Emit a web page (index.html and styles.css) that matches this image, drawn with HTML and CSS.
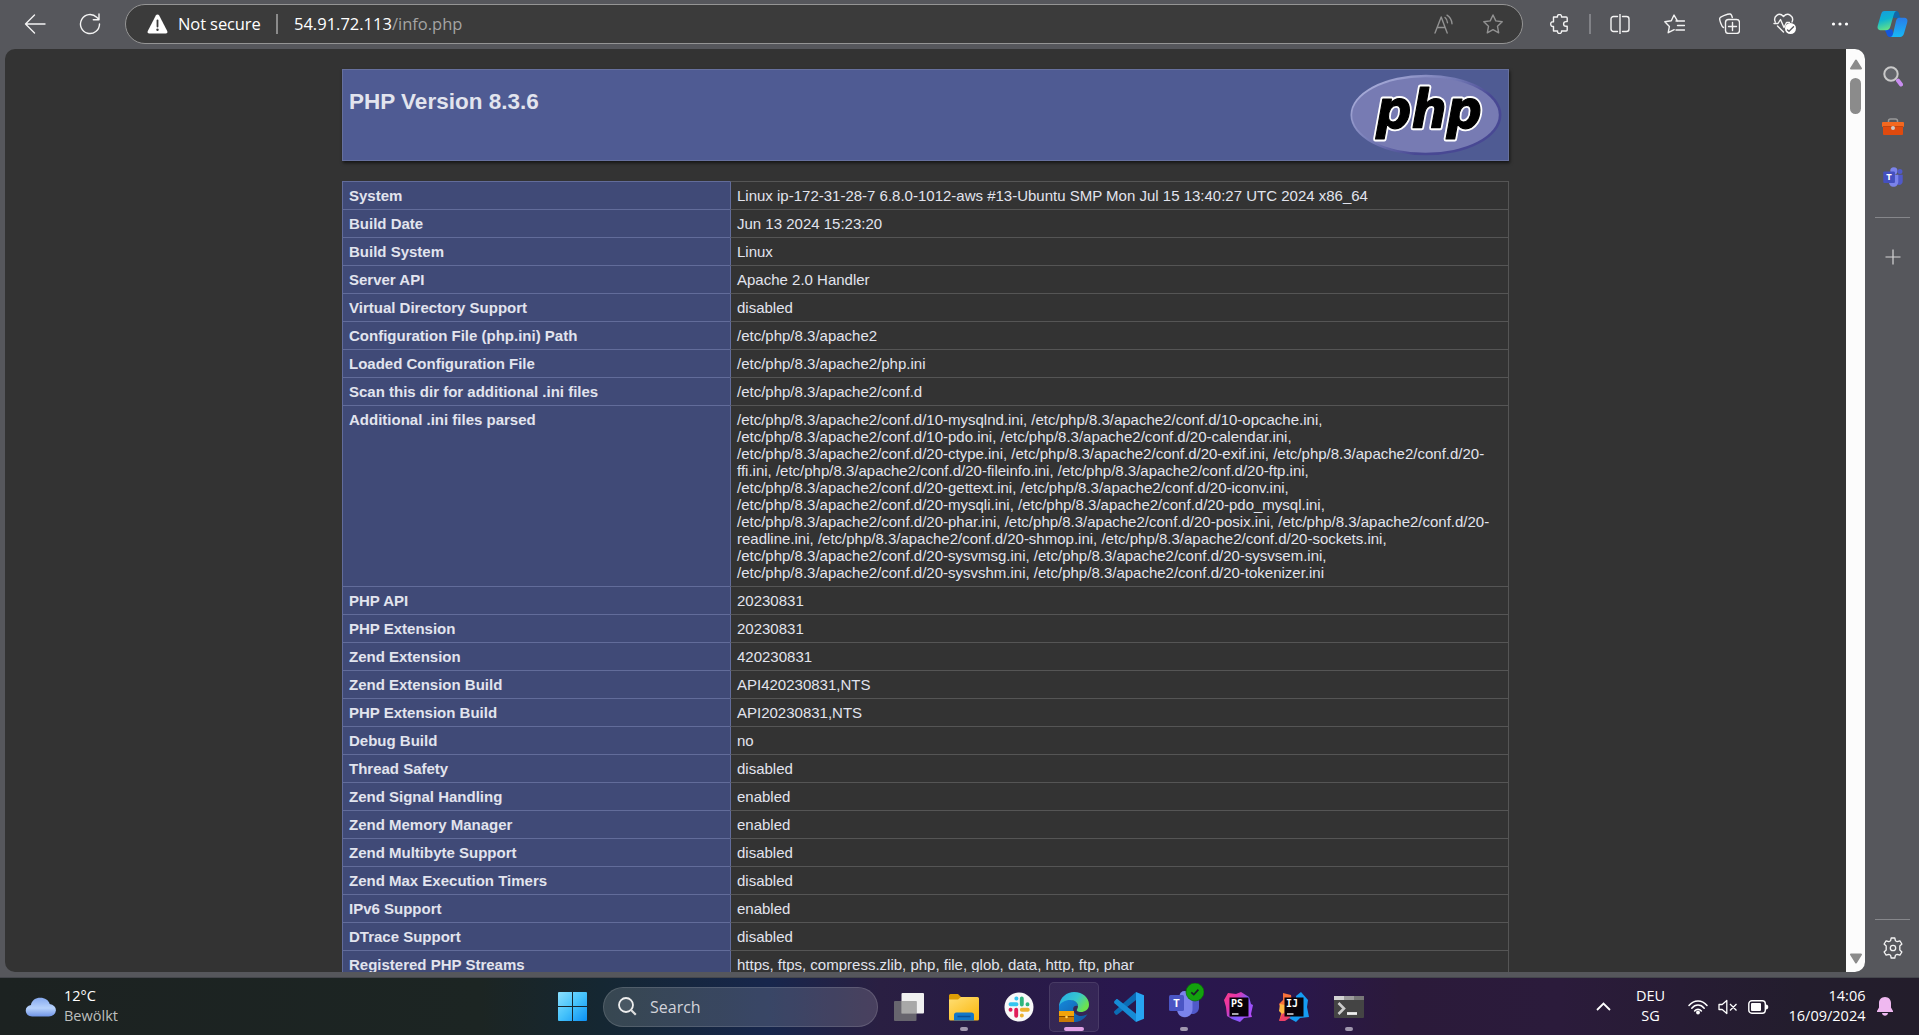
FILE: index.html
```html
<!DOCTYPE html>
<html lang="en">
<head>
<meta charset="utf-8">
<title>PHP 8.3.6 - phpinfo()</title>
<link rel="stylesheet" href="styles.css">
</head>
<body>
<div class="screen">
  <header class="toolbar">
    <span class="tool nav"><svg width="22" height="22" viewBox="0 0 22 22"><path d="M21 11H1.5M10.5 2 1.5 11l9 9"/></svg></span>
    <span class="tool nav"><svg width="22" height="22" viewBox="0 0 22 22"><path d="M20.5 11A9.5 9.5 0 1 1 17.7 4.3L20 6.5M20 1v5.7h-5.7"/></svg></span>
    <div class="address">
      <svg class="warn" width="21" height="20" viewBox="0 0 21 20"><path d="M10.5.5c.8 0 1.300.4 1.700 1.100l8 15.400c.7 1.400 0 2.500-1.500 2.500H2.300C.8 19.500.1 18.400.8 17l8-15.400C9.200.9 9.700.5 10.500.5z" fill="#fff"/><path d="M10.500 6.500v6" stroke="#3b3b3b" stroke-width="1.800" stroke-linecap="round"/><circle cx="10.500" cy="15.700" r="1.200" fill="#3b3b3b"/></svg>
      <span class="insecure">Not secure</span>
      <i class="bar"></i>
      <span class="url">54.91.72.113<span class="path">/info.php</span></span>
      <span class="tool dim read"><svg width="20" height="20" viewBox="0 0 20 20"><path d="M1 19 7.200 3l6 16M3.300 13.500h7.900M11 3.500c1.600 1.300 2.400 3 2.500 5.200M13 1.200c3.200 2 4.800 4.900 5 8.600"/></svg></span>
      <span class="tool dim star"><svg width="20" height="20" viewBox="0 0 20 20"><path d="m10 1 2.800 5.900 6.400.9-4.700 4.500 1.200 6.500L10 15.700l-5.700 3.100 1.200-6.500L.8 7.800l6.400-.9z"/></svg></span>
    </div>
    <span class="tool ext"><svg width="20" height="20" viewBox="0 0 20 20"><path d="M3.500 3h4c-.3-1.800.8-2.500 2-2.500s2.300.8 2 2.500h4.700c.6 0 1 .4 1 1v3.600h-1.300a2.200 2.200 0 1 0 0 4.600h1.300V16c0 .600-.4 1-1 1h-4.700c.2 1.700-.8 2.500-2 2.500s-2.200-.8-2-2.500h-4V12.400c-2 .3-2.800-.9-2.800-2.300s.9-2.600 2.800-2.300z"/></svg></span>
    <i class="split"></i>
    <span class="tool"><svg width="20" height="20" viewBox="0 0 20 20"><path d="M7.500 2.500H3.500a2.500 2.500 0 0 0-2.500 2.500v10a2.500 2.500 0 0 0 2.500 2.500h4M12.500 2.500h4a2.500 2.500 0 0 1 2.500 2.500v10a2.500 2.500 0 0 1-2.500 2.500h-4M10 0v20"/></svg></span>
    <span class="tool"><svg width="21" height="20" viewBox="0 0 21 20"><path d="M13.500 7.200 10 1 7.300 6.800.8 7.700l4.600 4.700-1.200 6.300 6-3M12 7h8.500M13.500 11.500h7M12 16h8.500"/></svg></span>
    <span class="tool"><svg width="21" height="21" viewBox="0 0 21 21"><path d="M4.500 14.500C2.500 13.800.5 7 .7 5.500 1 3.500 9.500.8 11 1s2 2 2.300 3.500"/><rect x="6.500" y="6.500" width="14" height="14" rx="3"/><path d="M13.500 9.500v8M9.500 13.500h8"/></svg></span>
    <span class="tool"><svg width="24" height="22" viewBox="0 0 24 22"><path d="M2.300 9C-.2 3.500 6-1.500 10.500 3.500 15-1.500 21.500 3.500 19 9M1 10.500h4l2.500-4 3.500 8 2.500-5h3M4.500 13l6 6"/><circle cx="17.500" cy="15.500" r="5.500" fill="#fff" stroke="none"/><path d="m14.500 17 1.500 1.300 4.500-4.500" stroke="#55565b"/></svg></span>
    <span class="tool"><svg width="18" height="6" viewBox="0 0 18 6"><g fill="#fff" stroke="none"><circle cx="2.500" cy="3" r="1.600"/><circle cx="9" cy="3" r="1.600"/><circle cx="15.500" cy="3" r="1.600"/></g></svg></span>
    <span class="tool copilot"><svg width="31" height="28" viewBox="0 0 31 28"><defs><linearGradient id="ca" x2=".3" y2="1"><stop stop-color="#159bdf"/><stop offset=".5" stop-color="#0fb3d0"/><stop offset="1" stop-color="#5fe08b"/></linearGradient><linearGradient id="cb" x2="0" y2="1"><stop stop-color="#2a7ce8"/><stop offset="1" stop-color="#17b8f5"/></linearGradient></defs><path d="M14 1h5c2.500 0 3 2 3.700 4.500L23.500 8h-7z" fill="#1267a8"/><path d="M7.500 19.500h8l1 7.500h-3c-3 0-3.500-2-4.200-4z" fill="#1457dc"/><path d="M7.500 1H20c-2 0-2.800 2-3.500 4.500L13.500 16c-.8 3-2 4.300-4.500 4.300H4.500C1 20.300 0 18.500.8 15.500L4 4.500C4.700 2 5.500 1 7.500 1z" fill="url(#ca)"/><path d="M21.500 7.700h5c3.500 0 4.500 2 3.700 4.800L27 23.500c-.7 2.300-2 3.500-4 3.500h-10c2 0 2.500-1.500 3.100-3.500L19 11c.5-2 1.200-2.600 2.500-3.300z" fill="url(#cb)"/></svg></span>
  </header>

  <div class="middle">
    <div class="viewport">
      <main class="page">
        <section class="banner">
          <h1>PHP Version 8.3.6</h1>
          <svg class="logo" width="152" height="82" viewBox="0 0 152 82"><defs><linearGradient id="rim" x2="1" y2=".7"><stop offset=".1" stop-color="#aeb2dd"/><stop offset=".5" stop-color="#7177b3"/><stop offset=".75" stop-color="#484893"/></linearGradient></defs><ellipse cx="76" cy="41" rx="75.500" ry="40.300" fill="url(#rim)"/><ellipse cx="75.500" cy="41" rx="73.300" ry="37.800" fill="#777bb3"/><g class="mark"><text class="halo" x="26" y="54" textLength="106" lengthAdjust="spacingAndGlyphs">php</text><text x="26" y="54" textLength="106" lengthAdjust="spacingAndGlyphs">php</text></g></svg>
        </section>
        <table class="info">
          <tr><td>System</td><td>Linux ip-172-31-28-7 6.8.0-1012-aws #13-Ubuntu SMP Mon Jul 15 13:40:27 UTC 2024 x86_64</td></tr>
          <tr><td>Build Date</td><td>Jun 13 2024 15:23:20</td></tr>
          <tr><td>Build System</td><td>Linux</td></tr>
          <tr><td>Server API</td><td>Apache 2.0 Handler</td></tr>
          <tr><td>Virtual Directory Support</td><td>disabled</td></tr>
          <tr><td>Configuration File (php.ini) Path</td><td>/etc/php/8.3/apache2</td></tr>
          <tr><td>Loaded Configuration File</td><td>/etc/php/8.3/apache2/php.ini</td></tr>
          <tr><td>Scan this dir for additional .ini files</td><td>/etc/php/8.3/apache2/conf.d</td></tr>
          <tr><td>Additional .ini files parsed</td><td>/etc/php/8.3/apache2/conf.d/10-mysqlnd.ini, /etc/php/8.3/apache2/conf.d/10-opcache.ini,<br>/etc/php/8.3/apache2/conf.d/10-pdo.ini, /etc/php/8.3/apache2/conf.d/20-calendar.ini,<br>/etc/php/8.3/apache2/conf.d/20-ctype.ini, /etc/php/8.3/apache2/conf.d/20-exif.ini, /etc/php/8.3/apache2/conf.d/20-<br>ffi.ini, /etc/php/8.3/apache2/conf.d/20-fileinfo.ini, /etc/php/8.3/apache2/conf.d/20-ftp.ini,<br>/etc/php/8.3/apache2/conf.d/20-gettext.ini, /etc/php/8.3/apache2/conf.d/20-iconv.ini,<br>/etc/php/8.3/apache2/conf.d/20-mysqli.ini, /etc/php/8.3/apache2/conf.d/20-pdo_mysql.ini,<br>/etc/php/8.3/apache2/conf.d/20-phar.ini, /etc/php/8.3/apache2/conf.d/20-posix.ini, /etc/php/8.3/apache2/conf.d/20-<br>readline.ini, /etc/php/8.3/apache2/conf.d/20-shmop.ini, /etc/php/8.3/apache2/conf.d/20-sockets.ini,<br>/etc/php/8.3/apache2/conf.d/20-sysvmsg.ini, /etc/php/8.3/apache2/conf.d/20-sysvsem.ini,<br>/etc/php/8.3/apache2/conf.d/20-sysvshm.ini, /etc/php/8.3/apache2/conf.d/20-tokenizer.ini</td></tr>
          <tr><td>PHP API</td><td>20230831</td></tr>
          <tr><td>PHP Extension</td><td>20230831</td></tr>
          <tr><td>Zend Extension</td><td>420230831</td></tr>
          <tr><td>Zend Extension Build</td><td>API420230831,NTS</td></tr>
          <tr><td>PHP Extension Build</td><td>API20230831,NTS</td></tr>
          <tr><td>Debug Build</td><td>no</td></tr>
          <tr><td>Thread Safety</td><td>disabled</td></tr>
          <tr><td>Zend Signal Handling</td><td>enabled</td></tr>
          <tr><td>Zend Memory Manager</td><td>enabled</td></tr>
          <tr><td>Zend Multibyte Support</td><td>disabled</td></tr>
          <tr><td>Zend Max Execution Timers</td><td>disabled</td></tr>
          <tr><td>IPv6 Support</td><td>enabled</td></tr>
          <tr><td>DTrace Support</td><td>disabled</td></tr>
          <tr><td>Registered PHP Streams</td><td>https, ftps, compress.zlib, php, file, glob, data, http, ftp, phar</td></tr>
        </table>
      </main>
      <div class="scrollbar">
        <svg width="14" height="11" viewBox="0 0 14 11"><path d="M7 1.500 12 9.500H2z" fill="#8b8b8b" stroke="#8b8b8b" stroke-width="2" stroke-linejoin="round"/></svg>
        <i class="thumb"></i>
        <svg class="down" width="14" height="11" viewBox="0 0 14 11"><path d="M7 9.500 12 1.500H2z" fill="#8b8b8b" stroke="#8b8b8b" stroke-width="2" stroke-linejoin="round"/></svg>
      </div>
    </div>
    <aside class="sidebar">
      <span class="side"><svg width="20" height="21" viewBox="0 0 20 21"><circle cx="8" cy="8" r="6.700" fill="#63656b" stroke="#c9c9c9" stroke-width="2"/><path d="m15 14.500 3 4" stroke="#c98df0" stroke-width="4" stroke-linecap="round"/></svg></span>
      <span class="side"><svg width="22" height="17" viewBox="0 0 22 17"><path d="M6.500 4.500V3A2 2 0 0 1 8.500 1h5a2 2 0 0 1 2 2v1.500" fill="none" stroke="#999" stroke-width="1.500"/><path d="M1 8h20v8a1 1 0 0 1-1 1H2a1 1 0 0 1-1-1z" fill="#e04a0e"/><rect y="4" width="22" height="5" rx="1" fill="#f4681f"/><path d="M1 8.500h20" stroke="#b83b0a" stroke-width=".8"/><circle cx="11" cy="10" r="2" fill="#cfc8c5"/></svg></span>
      <span class="side teams"><svg width="20" height="20" viewBox="0 0 35 36"><circle cx="19" cy="7" r="6.500" fill="#7b83eb"/><circle cx="30" cy="8" r="4.500" fill="#5059c9"/><path d="M25 14h10v11c0 6-6 9-10 6z" fill="#5059c9"/><path d="M10 14h17v12c0 13-17 13-17 0z" fill="#7b83eb"/><rect y="8" width="21" height="21" rx="2" fill="#4450c0"/><text x="10.500" y="24" class="tee">T</text></svg></span>
      <i class="rule"></i>
      <span class="side plus"><svg width="16" height="16" viewBox="0 0 16 16"><path d="M8 .5v15M.5 8h15" stroke="#d5d5d6" stroke-width="1.200"/></svg></span>
      <i class="rule low"></i>
      <span class="side gear"><svg width="22" height="22" viewBox="0 0 22 22" fill="none" stroke="#f3f3f3" stroke-width="1.300" stroke-linejoin="round"><path d="M9.200 1h3.600l.6 2.700 1.800 1 2.700-.9 2 3.200-2.100 1.900v4.200l2.100 1.900-2 3.200-2.700-.9-1.800 1-.6 2.700H9.200l-.6-2.700-1.800-1-2.700.9-2-3.200 2.100-1.900V8.900L2.100 7l2-3.200 2.700.9 1.800-1z"/><circle cx="11" cy="11" r="2.700"/></svg></span>
    </aside>
  </div>

  <footer class="taskbar">
    <div class="weather">
      <svg width="31" height="20" viewBox="0 0 26 20" preserveAspectRatio="none"><defs><linearGradient id="cl" x2="0" y2="1"><stop stop-color="#86a9ee"/><stop offset=".55" stop-color="#b7d2fc"/><stop offset="1" stop-color="#6f94e6"/></linearGradient></defs><path d="M6 19.500a5.800 5.800 0 0 1-1-11.400C5.500 3.300 9 .8 12.800.8c3.900 0 7.100 2.500 7.900 6.200a6.300 6.300 0 0 1-.7 12.500z" fill="url(#cl)"/></svg>
      <div class="lines"><span>12°C</span><span class="soft">Bewölkt</span></div>
    </div>
    <svg class="start" width="29" height="29" viewBox="0 0 29 29"><defs><linearGradient id="wn" x2="1" y2="1"><stop stop-color="#8be0ff"/><stop offset=".5" stop-color="#45c2fb"/><stop offset="1" stop-color="#0b90f5"/></linearGradient></defs><path d="M0 1a1 1 0 0 1 1-1h13v14H0zM15 0h13a1 1 0 0 1 1 1v13H15zM0 15h14v14H1a1 1 0 0 1-1-1zM15 15h14v13a1 1 0 0 1-1 1H15z" fill="url(#wn)"/></svg>
    <div class="search"><svg width="19" height="19" viewBox="0 0 19 19"><circle cx="8" cy="8" r="7" fill="#ffffff18" stroke="#eee" stroke-width="1.800"/><path d="m13 13 4.800 4.800" stroke="#ddd" stroke-width="2.200"/></svg>Search</div>
    <span class="app"><svg width="30" height="28" viewBox="0 0 30 28"><rect x="7.500" width="22.500" height="20.500" rx="1" fill="#f0f0f0"/><rect y="8" width="22.500" height="20" rx="1" fill="#727276" fill-opacity=".85"/><path d="M7.500 8h15v12.500h-15z" fill="#a8a8a8"/></svg></span>
    <span class="app run"><svg width="30" height="28" viewBox="0 0 30 28"><defs><linearGradient id="fo" x2=".8" y2="1"><stop stop-color="#ffdf75"/><stop offset="1" stop-color="#fbb912"/></linearGradient></defs><path d="M0 2.500A1.500 1.500 0 0 1 1.500 1H9l3 3h7v6H0z" fill="#dd9d06"/><path d="M0 6.500h9l3-2.500h16.500A1.500 1.500 0 0 1 30 5.500V26a1.500 1.500 0 0 1-1.500 1.500h-27A1.500 1.500 0 0 1 0 26z" fill="url(#fo)"/><path d="M5 27.500v-5.500A2.500 2.500 0 0 1 7.500 19.500h15a2.500 2.500 0 0 1 2.500 2.500v5.500z" fill="#1277c9"/><path d="M8.500 23.500h13" stroke="#0b4f96" stroke-width="1.500"/></svg></span>
    <span class="app"><svg width="30" height="30" viewBox="0 0 30 30"><circle cx="15" cy="15" r="14.500" fill="#f8f8f8"/><g stroke-width="3.900" stroke-linecap="round"><path d="M12.300 6.500h.2M6.500 12.200h6" stroke="#36c5f0"/><path d="M17.800 6.500v6M23.500 12.300v.1" stroke="#2eb67d"/><path d="M17.800 17.800h6M17.800 23.500h.1" stroke="#ecb22e"/><path d="M12.200 17.800v6M6.500 17.800h.1" stroke="#e01e5a"/></g></svg></span>
    <span class="app active run"><svg width="30" height="30" viewBox="0 0 30 30"><defs><linearGradient id="ed" x2="1" y2=".5"><stop stop-color="#23a8e8"/><stop offset=".6" stop-color="#37c6cf"/><stop offset="1" stop-color="#6be24e"/></linearGradient><linearGradient id="eb" x2="1" y2="1"><stop stop-color="#1589dc"/><stop offset="1" stop-color="#12559e"/></linearGradient></defs><path d="M0 13C4 5 18 6 19 14c-6-2-7 6 0 9.500 4 1.500 8-.5 9.500-1.500C25 28 20 30 15 30 4 30-1 22 0 13z" fill="url(#eb)"/><path d="M0 14C1 5 8 0 15 0c9 0 15 6 15 12.500 0 5.500-4.500 7.500-8 7.500-3 0-5-1.200-4-2.500 3-5-1-9.500-7-9.500C6 8 2 10.500 0 14z" fill="url(#ed)"/><rect y="19.500" width="15" height="10.500" fill="#c97a05"/><path d="M0 19h15v5.500H0z" fill="#f2a30a"/><path d="M0 24.500h15" stroke="#7c4500"/><circle cx="7.500" cy="25" r="1.300" fill="#ffd45b"/></svg></span>
    <span class="app"><svg width="30" height="30" viewBox="0 0 30 30"><path d="M22 0v8L3.500 22.500c-.8.600-1.500.5-2 0L.3 21c-.5-.7-.4-1.500.2-2.100z" fill="#0b6cb5"/><path d="M.5 9 2 7.400c.6-.6 1.300-.5 2 0L22 21.700V30L.5 11.300C-.1 10.600-.1 9.700.5 9z" fill="#168bd6"/><path d="m22 0 8 3.300v23.400L22 30z" fill="#27a5f2"/></svg></span>
    <span class="app run teams big"><svg width="35" height="36" viewBox="0 0 35 36"><circle cx="15.500" cy="13" r="5" fill="#7b83eb"/><path d="M18 16h12v8c0 5-4 9-12 6z" fill="#5059c9"/><path d="M8 16h15.500v10c0 11-15.500 11-15.500 0z" fill="#7b83eb"/><rect y="12" width="15" height="16" rx="1.500" fill="#4a55c4"/><text x="7.500" y="24" class="tee small">T</text><circle cx="26" cy="9" r="9" fill="#13a10e" stroke="#0c6b0a" stroke-width=".7"/><path d="m22.300 9.300 2.500 2.300 4.600-5" fill="none" stroke="#1d1d2b" stroke-width="1.700"/></svg></span>
    <span class="app"><svg width="30" height="30" viewBox="0 0 30 30"><defs><linearGradient id="ps" x2="1" y2=".7"><stop stop-color="#fc3f85"/><stop offset=".35" stop-color="#e535ab"/><stop offset=".65" stop-color="#7b5cff"/><stop offset="1" stop-color="#b74af7"/></linearGradient></defs><path d="m4 1 8 1 5-2 8 5 2 7 2 1-2 9 1 3-8 1-4 4-8-3-5-3L2 15 0 8z" fill="url(#ps)"/><path d="M5.500 5.500h19v19h-19z" fill="#080208"/><text x="7" y="15" class="jb">PS</text><path d="M8 22h6.500" stroke="#fff" stroke-width="1.300"/></svg></span>
    <span class="app"><svg width="30" height="30" viewBox="0 0 30 30"><path d="M4 1 12 3l3 24-9-4-6 6 3-10-3-7 4-4z" fill="#f9713a"/><path d="m1 12 5 1-1 11-5-5z" fill="#fcb843"/><path d="m17 4 5-4 7 8-1 7 2 10-9 1-4 4-9-5 10-7z" fill="#159cf2"/><path d="m0 29 4-8 8 4-6 4z" fill="#ec3f67"/><path d="M5.500 5.500h19v19h-19z" fill="#080208"/><text x="7" y="15" class="jb">IJ</text><path d="M8 22h6.500" stroke="#fff" stroke-width="1.300"/></svg></span>
    <span class="app run"><svg width="30" height="22" viewBox="0 0 30 22"><rect width="30" height="22" rx="1" fill="#444"/><path d="M0 0h10v4H0z" fill="#d2d2d2"/><path d="M10 0h10v4H10z" fill="#9c9c9c"/><path d="M20 0h10v4H20z" fill="#777"/><path d="m4.500 7 5.500 5.500L4.500 18" fill="none" stroke="#ccc" stroke-width="2.600"/><path d="M13 17.500h10" stroke="#eee" stroke-width="2.800"/></svg></span>
    <div class="tray">
      <svg class="chev" width="15" height="9" viewBox="0 0 15 9"><path d="m1 8 6.500-6.500L14 8" fill="none" stroke="#fff" stroke-width="1.800"/></svg>
      <div class="lines lang"><span>DEU</span><span>SG</span></div>
      <svg width="20" height="16" viewBox="0 0 20 16"><g fill="none" stroke="#fff" stroke-width="1.500" stroke-linecap="round"><path d="M1 6.500c5-6 13-6 18 0M3.800 9.200c3.500-4.200 8.900-4.200 12.400 0M6.600 12c2-2.500 4.800-2.500 6.800 0"/></g><circle cx="10" cy="13.500" r="1.900" fill="#fff"/></svg>
      <svg width="20" height="16" viewBox="0 0 20 16"><path d="M1 5.500h3.200l4.600-4v13l-4.600-4H1zM12 5l6.500 6.500M18.500 5 12 11.500" fill="none" stroke="#fff" stroke-width="1.300" stroke-linejoin="round"/></svg>
      <svg width="21" height="14" viewBox="0 0 21 14"><rect x=".8" y=".8" width="16.500" height="12.400" rx="3" fill="none" stroke="#fff" stroke-width="1.400"/><rect x="3" y="3" width="10" height="8" rx="1" fill="#fff"/><path d="M18 4.500c3 0 3 5 0 5z" fill="#fff"/></svg>
      <div class="lines clock"><span>14:06</span><span>16/09/2024</span></div>
      <svg class="bell" width="16" height="19" viewBox="0 0 16 19"><path d="M8 0c3.700 0 6 2.800 6 6v4.500l2 3.500v1H0v-1l2-3.500V6c0-3.200 2.300-6 6-6zM5 16h6c-.3 3.500-5.700 3.500-6 0z" fill="#efb8f0"/></svg>
    </div>
  </footer>
</div>
</body>
</html>
```
FILE: styles.css
```css
* { box-sizing: border-box; }
body { margin: 0; background: #55565b; overflow: hidden; }
svg { display: block; flex: none; }
.screen { width: 1919px; height: 1035px; display: flex; flex-direction: column; font-family: "Open Sans", "Noto Sans", sans-serif; color: #fff; }

.toolbar { height: 49px; flex: none; display: flex; align-items: center; padding-left: 7px; background: #56575c; padding-bottom: 2px; }
.tool { width: 55px; display: flex; justify-content: center; flex: none; }
.tool svg { fill: none; stroke: #f3f3f3; stroke-width: 1.4; stroke-linecap: round; stroke-linejoin: round; }
.tool.copilot { width: 50px; }
.tool.copilot svg { stroke: none; }
.tool.dim svg { stroke: #929292; }
.address { width: 1398px; height: 40px; margin-left: 8px; flex: none; display: flex; align-items: center; border: 1px solid #959595; border-radius: 20px; background: #3b3b3b; padding-left: 21px; font-size: 16.5px; line-height: 24px; white-space: nowrap; }
.insecure { width: 86px; margin-left: 10px; letter-spacing: -.1px; }
.bar { width: 2px; height: 20px; margin-left: 12px; background: #8b8b8b; }
.url { margin-left: 16px; flex: 1; }
.path { color: #a4a4a4; }
.read, .star { width: 49px; }
.star { margin-right: 5px; }
.ext { margin-left: 9px; }
.split { width: 2px; height: 20px; margin: 0 1px 0 2px; background: #818287; flex: none; }

.middle { height: 928px; flex: none; display: flex; background: #56575c; padding-bottom: 5px; }
.viewport { width: 1860px; margin-left: 5px; display: flex; border-radius: 10px; overflow: hidden; background: #333; }
.page { flex: 1; padding: 20px 0 0 337px; font-family: "Liberation Sans", Arial, sans-serif; color: #e2e4ee; }
.banner { width: 1167px; height: 92px; display: flex; justify-content: space-between; padding: 4px 6px; border: 1px solid #66709e; background: #4f5b93; box-shadow: 1px 2px 3px #0009; }
.banner h1 { margin: 15px 0 0; font-size: 22.5px; line-height: 26px; }
.mark { font: italic bold 53px "DejaVu Sans", sans-serif; fill: #000; stroke: #000; stroke-width: 1.2px; stroke-linejoin: round; }
.halo { stroke: #fff; stroke-width: 5px; }
.info { width: 1167px; margin-top: 20px; border-spacing: 0; table-layout: fixed; font-size: 15px; line-height: 17px; border-right: 1px solid #555; }
.info td { border-top: 1px solid #555; border-left: 1px solid #626c9a; padding: 5px 5px 5px 6px; vertical-align: top; white-space: nowrap; }
.info td:first-child { width: 388px; background: #404a77; border-top-color: #626c9a; font-weight: bold; }

.scrollbar { width: 19px; background: #fcfcfc; display: flex; flex-direction: column; align-items: center; padding: 10px 0 8px; }
.thumb { width: 11px; height: 36px; margin-top: 8px; border-radius: 6px; background: #8b8b8b; }
.down { margin-top: auto; }

.sidebar { width: 54px; display: flex; flex-direction: column; align-items: center; padding: 2px 0 0 1px; }
.side { height: 50px; display: flex; align-items: center; }
.side.teams { padding-top: 1px; }
.rule { width: 35px; height: 1px; margin: 16px 0 14px; background: #86878b; flex: none; }
.rule.low { margin: auto 0 3px; }
.side.gear { height: 49px; }
.tee { font: bold 17px "Open Sans", sans-serif; fill: #fff; text-anchor: middle; }
.tee.small { font-size: 11px; }

.taskbar { height: 58px; display: flex; align-items: center; border-top: 1px solid #45474d; background: linear-gradient(90deg, #1c2221 0, #1c2523 480px, #152732 600px, #17264c 770px, #2a1f42 880px, #281c44 970px, #29174e 1130px, #2a174c 1290px, #2b1a3a 1400px, #2b1b3b 1560px, #231d2d 1800px, #231d2b 1919px); }
.weather { width: 558px; flex: none; display: flex; align-items: center; padding-left: 25px; gap: 8px; }
.lines { display: flex; flex-direction: column; font-size: 14.5px; line-height: 20px; padding-bottom: 2px; white-space: nowrap; }
.soft { color: #bdbfbe; }
.search { width: 275px; height: 40px; margin: 0 3px 0 16px; flex: none; display: flex; align-items: center; gap: 13px; padding: 0 0 0 14px; border: 1px solid #ffffff22; border-radius: 20px; background: #ffffff26; color: #d2d3da; font-size: 16px; }
.app { position: relative; width: 55px; height: 50px; flex: none; display: flex; align-items: center; justify-content: center; }
.app.run::after { content: ""; position: absolute; bottom: 1px; left: 24px; width: 8px; height: 4px; border-radius: 2px; background: #a097ae; }
.app.active { width: 50px; margin: 0 2.5px; border: 1px solid #ffffff18; border-radius: 5px; background: #ffffff10; }
.app.active::after { left: 14px; bottom: 0; width: 20px; background: #dfa0e6; }
.app.big svg { margin: -11px 0 0 5px; }
.jb { font: bold 10px "DejaVu Sans Mono", monospace; fill: #fff; }
.tray { flex: 1; display: flex; align-items: center; }
.chev { margin-left: 219.5px; }
.lang { width: 34px; margin: 0 20px 0 23px; align-items: center; }
.tray > svg + svg { margin-left: 10px; }
.clock { width: 79px; margin-left: 18px; align-items: flex-end; }
.bell { margin-left: 11px; }
```
